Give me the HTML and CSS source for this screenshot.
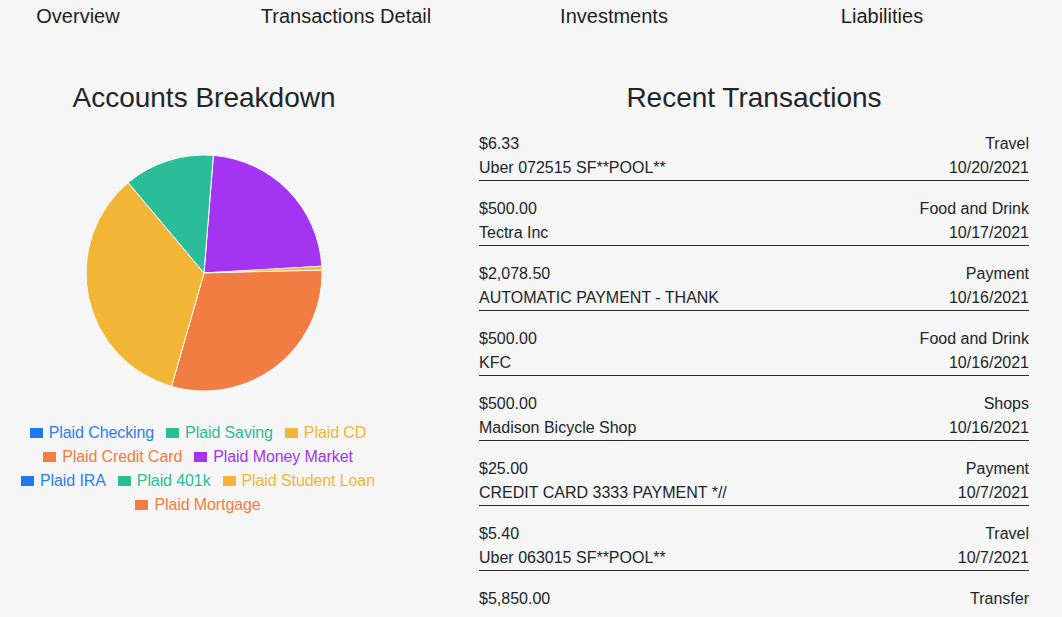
FILE: index.html
```html
<!DOCTYPE html>
<html lang="en">
<head>
<meta charset="utf-8">
<title>Dashboard</title>
<link rel="stylesheet" href="styles.css">
</head>
<body>
<nav class="nav">
  <a class="nav-item">Overview</a>
  <a class="nav-item">Transactions Detail</a>
  <a class="nav-item">Investments</a>
  <a class="nav-item">Liabilities</a>
</nav>
<main class="main">
  <section class="accounts">
    <h2 class="title">Accounts Breakdown</h2>
    <svg class="pie" width="236" height="236" viewBox="0 0 236 236">
      <path d="M118 118 L127.38 0.37 A118 118 0 0 1 235.80 111.21 Z" fill="#a334f1" stroke="#fff" stroke-width="1"/>
      <path d="M118 118 L235.80 111.21 A118 118 0 0 1 235.96 115.12 Z" fill="#f2b535" stroke="#fff" stroke-width="0.6"/>
      <path d="M118 118 L235.96 115.12 A118 118 0 0 1 85.47 231.43 Z" fill="#f27d42" stroke="#fff" stroke-width="1"/>
      <path d="M118 118 L85.47 231.43 A118 118 0 0 1 42.15 27.61 Z" fill="#f2b535" stroke="#fff" stroke-width="1"/>
      <path d="M118 118 L42.15 27.61 A118 118 0 0 1 127.38 0.37 Z" fill="#2bbd99" stroke="#fff" stroke-width="1"/>
    </svg>
    <div class="legend">
      <div class="legend-row">
        <span class="item blue"><i class="box"></i>Plaid Checking</span>
        <span class="item teal"><i class="box"></i>Plaid Saving</span>
        <span class="item yellow"><i class="box"></i>Plaid CD</span>
      </div>
      <div class="legend-row">
        <span class="item orange"><i class="box"></i>Plaid Credit Card</span>
        <span class="item purple"><i class="box"></i>Plaid Money Market</span>
      </div>
      <div class="legend-row">
        <span class="item blue"><i class="box"></i>Plaid IRA</span>
        <span class="item teal"><i class="box"></i>Plaid 401k</span>
        <span class="item yellow"><i class="box"></i>Plaid Student Loan</span>
      </div>
      <div class="legend-row">
        <span class="item orange"><i class="box"></i>Plaid Mortgage</span>
      </div>
    </div>
  </section>
  <section class="transactions">
    <h2 class="title">Recent Transactions</h2>
    <ul class="tx-list">
      <li class="tx"><div class="tx-line first"><span>$6.33</span><span>Travel</span></div><div class="tx-line"><span>Uber 072515 SF**POOL**</span><span>10/20/2021</span></div></li>
      <li class="tx"><div class="tx-line first"><span>$500.00</span><span>Food and Drink</span></div><div class="tx-line"><span>Tectra Inc</span><span>10/17/2021</span></div></li>
      <li class="tx"><div class="tx-line first"><span>$2,078.50</span><span>Payment</span></div><div class="tx-line"><span>AUTOMATIC PAYMENT - THANK</span><span>10/16/2021</span></div></li>
      <li class="tx"><div class="tx-line first"><span>$500.00</span><span>Food and Drink</span></div><div class="tx-line"><span>KFC</span><span>10/16/2021</span></div></li>
      <li class="tx"><div class="tx-line first"><span>$500.00</span><span>Shops</span></div><div class="tx-line"><span>Madison Bicycle Shop</span><span>10/16/2021</span></div></li>
      <li class="tx"><div class="tx-line first"><span>$25.00</span><span>Payment</span></div><div class="tx-line"><span>CREDIT CARD 3333 PAYMENT *//</span><span>10/7/2021</span></div></li>
      <li class="tx"><div class="tx-line first"><span>$5.40</span><span>Travel</span></div><div class="tx-line"><span>Uber 063015 SF**POOL**</span><span>10/7/2021</span></div></li>
      <li class="tx last"><div class="tx-line first"><span>$5,850.00</span><span>Transfer</span></div></li>
    </ul>
  </section>
</main>
</body>
</html>
```
FILE: styles.css
```css
html, body {
  margin: 0;
  padding: 0;
}
body {
  background: #f5f6f5;
  color: #212529;
  font-family: "Liberation Sans", Arial, Helvetica, sans-serif;
  overflow: hidden;
  width: 1062px;
  height: 617px;
}
.nav {
  display: grid;
  grid-template-columns: repeat(4, 268px);
  margin-left: -56px;
  padding-top: 4px;
}
.nav-item {
  text-align: center;
  font-size: 20px;
  line-height: 24px;
  color: #1d1f21;
}
.main {
  display: flex;
  gap: 71px;
  margin-top: 53px;
}
.accounts {
  width: 408px;
  display: flex;
  flex-direction: column;
  align-items: center;
}
.transactions {
  width: 550px;
}
.title {
  margin: 0;
  font-size: 28px;
  line-height: 34px;
  font-weight: 400;
  text-align: center;
  color: #212529;
}
.pie {
  display: block;
  margin-top: 40px;
}
.legend {
  margin-top: 30px;
  display: flex;
  flex-direction: column;
  align-items: center;
}
.legend-row {
  display: flex;
  justify-content: center;
}
.item {
  display: flex;
  align-items: center;
  font-size: 16px;
  line-height: 24px;
  margin-right: 12px;
  letter-spacing: -0.1px;
}
.box {
  display: block;
  width: 13px;
  height: 10px;
  margin-right: 6px;
}
.blue { color: #2b7ff0; }
.blue .box { background: #1f7af2; }
.teal { color: #2bbd99; }
.teal .box { background: #2bbd99; }
.yellow { color: #f2b535; }
.yellow .box { background: #f2b535; }
.orange { color: #f27d42; }
.orange .box { background: #f27d42; }
.purple { color: #a334f1; }
.purple .box { background: #a334f1; }
.tx-list {
  list-style: none;
  margin: 16px 0 0;
  padding: 0;
}
.tx {
  border-bottom: 1px solid #2a2a2a;
  margin-bottom: 15px;
  font-size: 16px;
}
.tx.last {
  border-bottom: none;
}
.tx-line {
  display: flex;
  justify-content: space-between;
  line-height: 24px;
}
.tx-line.first {
  line-height: 25px;
}
```
